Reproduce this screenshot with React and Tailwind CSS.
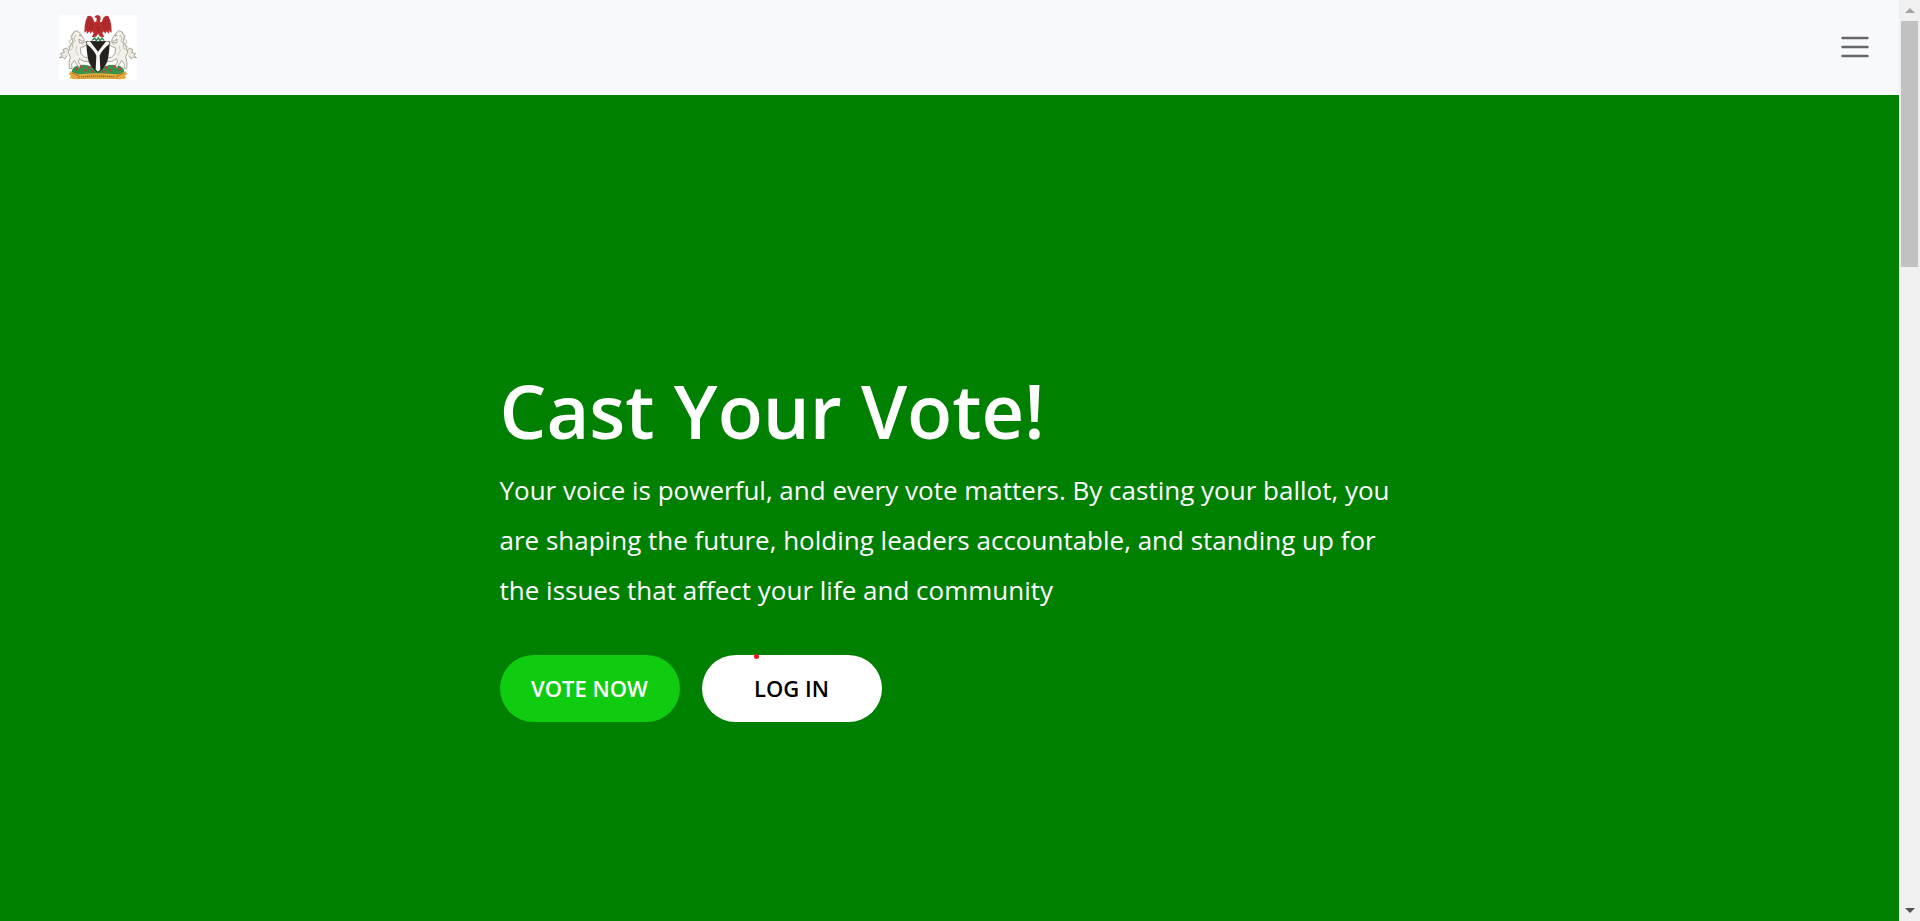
function Horse() {
  return (
    <g>
      <path d="M30 108 22 99 12 104 16 112 4 116 9 121 1 129 11 126 17 132 25 122" fill="#ebe9e2" stroke="#a5a299" strokeWidth="3" />
      <path d="M38 65 44 51 54 47 64 55 74 71 76 77 69 79 60 72 61 84 72 83 86 78 90 83 78 93 64 99 66 117 76 126 90 130 91 139 77 140 61 131 58 141 66 152 61 159 53 148 46 136 38 147 39 160 31 161 30 143 34 126 28 112 32 97 41 80Z" fill="#f3f1e9" stroke="#99958a" strokeWidth="2.5" />
      <path d="M45 53 35 63 39 71 30 79 35 88 27 98M51 60 45 70 48 77 40 87 42 97 35 106" fill="none" stroke="#bdb8aa" strokeWidth="3" />
      <path d="M54 92 50 108 58 122M62 85 76 88" fill="none" stroke="#d0ccc1" strokeWidth="3" />
      <path d="m61 60 4 2" stroke="#555046" strokeWidth="3" />
    </g>
  );
}

function CoatOfArms() {
  return (
    <svg viewBox="0 0 234 195" className="h-[65px] w-[78px]" role="img" aria-label="Nigerian coat of arms">
      <path fill="#fff" d="M0 0h234v195H0z" />
      <path d="M38 170q2-15 20-19 22-5 38 3l21 9 21-9q16-8 38-3 18 4 20 19l-9 12q-70-8-140 0Z" fill="#35934b" />
      <Horse />
      <g transform="translate(234 0) scale(-1 1)"><Horse /></g>
      <path d="M82 80q18-5 35-1 17-4 35 1 0 23-4 46-4 30-31 47-27-17-31-47-4-23-4-46Z" fill="#24211e" />
      <path d="m84 80 9-1 24 31 24-31 9 1v8q-21 17-28 34l2 42-7 6-7-6 2-42q-7-17-28-34Z" fill="#f7f7f5" />
      <path d="M108 7 105 8 109 2 117 0 124 4 125 12 122 20 128 21 133 8 140 2 148 3 154 17 157 32 158 53 151 48 150 57 143 49 139 56 134 49 130 55 136 66H123L117 56 111 66H98L104 55 100 49 95 56 91 49 84 57 83 48 76 53 77 32 80 17 86 3 94 2 101 8 106 21 112 20 113 10Z" fill="#b92d2e" />
      <path d="m89 10-6 31M96 12l-5 33M101 22l-3 22M145 10l6 31M138 12l5 33M133 22l3 22M117 25v26M109 34l6 6M125 34l-6 6" fill="none" stroke="#8a2327" strokeWidth="2" />
      <path d="M98 68q19-7 38 0l-2 11q-17-4-34 0Z" fill="#ecefe8" />
      <path d="m100 76 7-7 5 8 6-8 5 8 6-8 6 7" fill="none" stroke="#288656" strokeWidth="4" />
      <path d="M35 169 29 178 36 182 32 189Q45 195 61 192H173Q189 195 202 189L198 182 205 178 199 169Q187 176 175 178 117 172 59 178 47 176 35 169Z" fill="#dfa93c" />
      <path d="m39 174 21 9v8M195 174l-21 9v8" fill="none" stroke="#c9652d" strokeWidth="3" />
      <path d="M66 186q51-5 102 0" fill="none" stroke="#8f6a30" strokeWidth="4" strokeDasharray="4 2" />
      <g fill="#d4363d">
        <circle cx="52" cy="162" r="4" /><circle cx="66" cy="155" r="4" /><circle cx="79" cy="166" r="4" />
        <circle cx="91" cy="158" r="4" /><circle cx="100" cy="170" r="4" /><circle cx="143" cy="158" r="4" />
        <circle cx="155" cy="166" r="4" /><circle cx="168" cy="155" r="4" /><circle cx="182" cy="162" r="4" />
        <circle cx="134" cy="170" r="4" />
      </g>
    </svg>
  );
}

function Scrollbar() {
  return (
    <div className="flex w-[21px] shrink-0 flex-col items-center bg-[#f0f0f0]" aria-hidden="true">
      <div className="flex h-[21px] items-center">
        <svg viewBox="0 0 10 5" className="h-[5px] w-[10px]"><path d="M5 0 10 5H0Z" fill="#a3a3a3" /></svg>
      </div>
      <div className="min-h-0 w-[17px] grow">
        <div className="h-[28%] bg-[#c1c1c1]" />
      </div>
      <div className="flex h-[21px] items-center">
        <svg viewBox="0 0 10 5" className="h-[5px] w-[10px]"><path d="M0 0H10L5 5Z" fill="#505050" /></svg>
      </div>
    </div>
  );
}

export default function App() {
  return (
    <div className="flex h-screen font-['Open_Sans','Noto_Sans',sans-serif]">
      <div className="flex min-w-0 flex-1 flex-col overflow-hidden">
        <header className="flex shrink-0 items-center justify-between bg-[#f8f9fc] py-[15px] pr-[27px] pl-[59px]">
          <a href="#home"><CoatOfArms /></a>
          <button type="button" aria-label="Toggle navigation" className="pb-0.5">
            <svg viewBox="0 0 30 30" className="size-[34px]" fill="none" stroke="#67666b" strokeWidth="2.2" strokeLinecap="round">
              <path d="M4 7h22M4 15h22M4 23h22" />
            </svg>
          </button>
        </header>
        <main className="flex grow flex-col items-center bg-[#008000] pt-[268px] text-white">
          <section className="w-full max-w-[900px]">
            <h1 className="text-[74px] leading-[96px] font-semibold">Cast Your Vote!</h1>
            <p className="mt-1.5 text-[26px] leading-[50px]">
              Your voice is powerful, and every vote matters. By casting your ballot, you are shaping the future, holding leaders accountable, and standing up for the issues that affect your life and community
            </p>
            <div className="mt-10 flex gap-[22px] text-[22px] font-semibold">
              <button type="button" className="h-[67px] w-[180px] rounded-full bg-[#10cc10]">VOTE NOW</button>
              <button type="button" className="relative h-[67px] w-[180px] rounded-full bg-white text-black">
                LOG IN
                <span className="absolute top-[-1px] left-[52px] size-[5px] rounded-full bg-[#f01818]" />
              </button>
            </div>
          </section>
        </main>
      </div>
      <Scrollbar />
    </div>
  );
}
